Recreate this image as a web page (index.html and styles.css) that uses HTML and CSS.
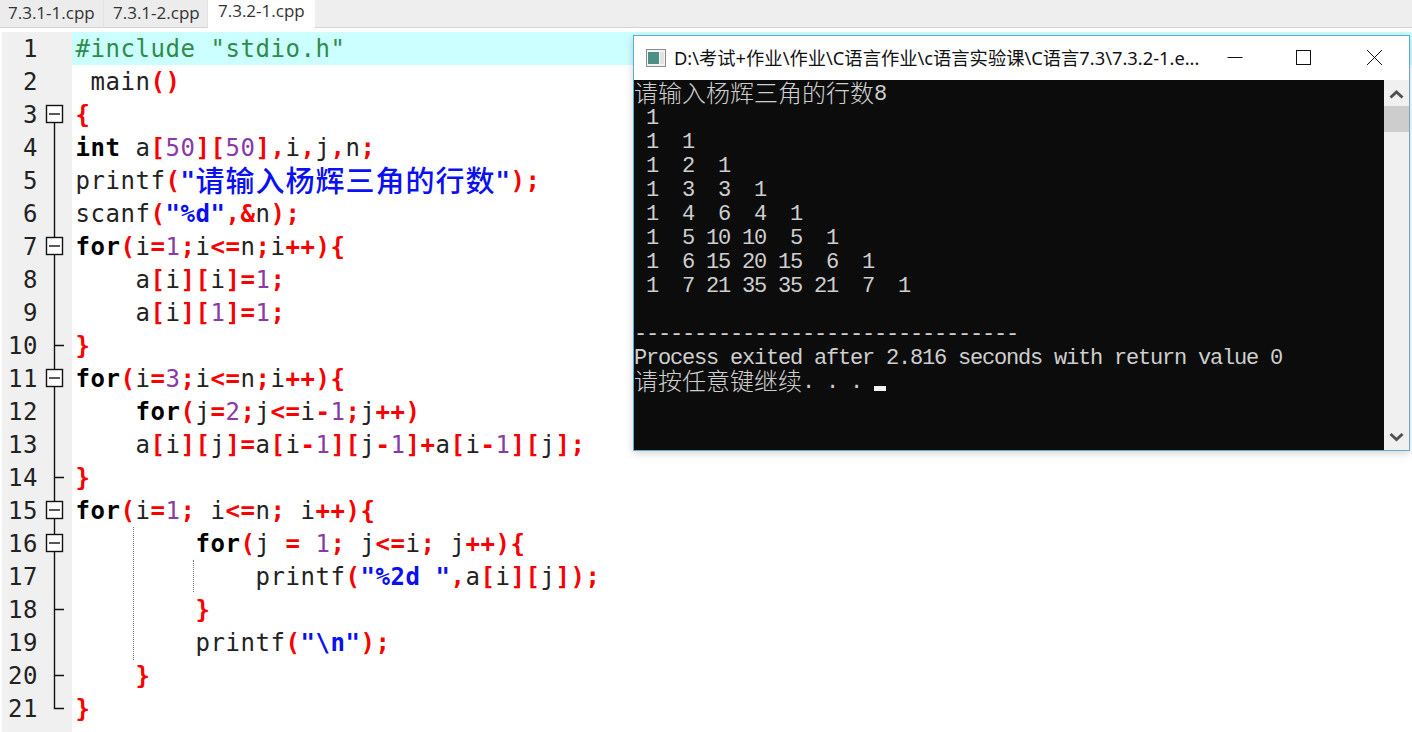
FILE: index.html
```html
<!DOCTYPE html>
<html lang="zh">
<head>
<meta charset="utf-8">
<title>7.3.2-1.cpp</title>
<link rel="stylesheet" href="styles.css">
</head>
<body>
<svg class="defs" width="0" height="0">
  <symbol id="f-open" viewBox="0 0 26 33"><path d="M9.5 25V33" class="fl"/><rect x="1.5" y="7.5" width="16" height="17" class="fb"/><path d="M4 16H15" class="fl"/></symbol>
  <symbol id="f-box" viewBox="0 0 26 33"><path d="M9.5 0V33" class="fl"/><rect x="1.5" y="7.5" width="16" height="17" class="fb"/><path d="M4 16H15" class="fl"/></symbol>
  <symbol id="f-line" viewBox="0 0 26 33"><path d="M9.5 0V33" class="fl"/></symbol>
  <symbol id="f-tick" viewBox="0 0 26 33"><path d="M9.5 0V33M9.5 16.5H19" class="fl"/></symbol>
  <symbol id="f-end" viewBox="0 0 26 33"><path d="M9.5 0V16.5H19" class="fl"/></symbol>
</svg>

<div class="tabbar">
  <div class="tab">7.3.1-1.cpp</div>
  <div class="tab">7.3.1-2.cpp</div>
  <div class="tab active">7.3.2-1.cpp</div>
</div>

<div class="editor">
  <div class="row"><div class="num">1</div><div class="fold"></div><pre class="code hl"><span class="p">#include "stdio.h"</span></pre></div>
  <div class="row"><div class="num">2</div><div class="fold"></div><pre class="code"> main<span class="o">()</span></pre></div>
  <div class="row"><div class="num">3</div><div class="fold"><svg class="ico"><use href="#f-open"/></svg></div><pre class="code"><span class="o">{</span></pre></div>
  <div class="row"><div class="num">4</div><div class="fold"><svg class="ico"><use href="#f-line"/></svg></div><pre class="code"><span class="k">int</span> a<span class="o">[</span><span class="n">50</span><span class="o">][</span><span class="n">50</span><span class="o">],</span>i<span class="o">,</span>j<span class="o">,</span>n<span class="o">;</span></pre></div>
  <div class="row"><div class="num">5</div><div class="fold"><svg class="ico"><use href="#f-line"/></svg></div><pre class="code">printf<span class="o">(</span><span class="s">"<span class="zh">请输入杨辉三角的行数</span>"</span><span class="o">);</span></pre></div>
  <div class="row"><div class="num">6</div><div class="fold"><svg class="ico"><use href="#f-line"/></svg></div><pre class="code">scanf<span class="o">(</span><span class="s">"%d"</span><span class="o">,&amp;</span>n<span class="o">);</span></pre></div>
  <div class="row"><div class="num">7</div><div class="fold"><svg class="ico"><use href="#f-box"/></svg></div><pre class="code"><span class="k">for</span><span class="o">(</span>i<span class="o">=</span><span class="n">1</span><span class="o">;</span>i<span class="o">&lt;=</span>n<span class="o">;</span>i<span class="o">++){</span></pre></div>
  <div class="row"><div class="num">8</div><div class="fold"><svg class="ico"><use href="#f-line"/></svg></div><pre class="code">    a<span class="o">[</span>i<span class="o">][</span>i<span class="o">]=</span><span class="n">1</span><span class="o">;</span></pre></div>
  <div class="row"><div class="num">9</div><div class="fold"><svg class="ico"><use href="#f-line"/></svg></div><pre class="code">    a<span class="o">[</span>i<span class="o">][</span><span class="n">1</span><span class="o">]=</span><span class="n">1</span><span class="o">;</span></pre></div>
  <div class="row"><div class="num">10</div><div class="fold"><svg class="ico"><use href="#f-tick"/></svg></div><pre class="code"><span class="o">}</span></pre></div>
  <div class="row"><div class="num">11</div><div class="fold"><svg class="ico"><use href="#f-box"/></svg></div><pre class="code"><span class="k">for</span><span class="o">(</span>i<span class="o">=</span><span class="n">3</span><span class="o">;</span>i<span class="o">&lt;=</span>n<span class="o">;</span>i<span class="o">++){</span></pre></div>
  <div class="row"><div class="num">12</div><div class="fold"><svg class="ico"><use href="#f-line"/></svg></div><pre class="code">    <span class="k">for</span><span class="o">(</span>j<span class="o">=</span><span class="n">2</span><span class="o">;</span>j<span class="o">&lt;=</span>i<span class="o">-</span><span class="n">1</span><span class="o">;</span>j<span class="o">++)</span></pre></div>
  <div class="row"><div class="num">13</div><div class="fold"><svg class="ico"><use href="#f-line"/></svg></div><pre class="code">    a<span class="o">[</span>i<span class="o">][</span>j<span class="o">]=</span>a<span class="o">[</span>i<span class="o">-</span><span class="n">1</span><span class="o">][</span>j<span class="o">-</span><span class="n">1</span><span class="o">]+</span>a<span class="o">[</span>i<span class="o">-</span><span class="n">1</span><span class="o">][</span>j<span class="o">];</span></pre></div>
  <div class="row"><div class="num">14</div><div class="fold"><svg class="ico"><use href="#f-tick"/></svg></div><pre class="code"><span class="o">}</span></pre></div>
  <div class="row"><div class="num">15</div><div class="fold"><svg class="ico"><use href="#f-box"/></svg></div><pre class="code"><span class="k">for</span><span class="o">(</span>i<span class="o">=</span><span class="n">1</span><span class="o">;</span> i<span class="o">&lt;=</span>n<span class="o">;</span> i<span class="o">++){</span></pre></div>
  <div class="row"><div class="num">16</div><div class="fold"><svg class="ico"><use href="#f-box"/></svg></div><pre class="code">        <span class="k">for</span><span class="o">(</span>j <span class="o">=</span> <span class="n">1</span><span class="o">;</span> j<span class="o">&lt;=</span>i<span class="o">;</span> j<span class="o">++){</span></pre></div>
  <div class="row"><div class="num">17</div><div class="fold"><svg class="ico"><use href="#f-line"/></svg></div><pre class="code">            printf<span class="o">(</span><span class="s">"%2d "</span><span class="o">,</span>a<span class="o">[</span>i<span class="o">][</span>j<span class="o">]);</span></pre></div>
  <div class="row"><div class="num">18</div><div class="fold"><svg class="ico"><use href="#f-tick"/></svg></div><pre class="code">        <span class="o">}</span></pre></div>
  <div class="row"><div class="num">19</div><div class="fold"><svg class="ico"><use href="#f-line"/></svg></div><pre class="code">        printf<span class="o">(</span><span class="s">"\n"</span><span class="o">);</span></pre></div>
  <div class="row"><div class="num">20</div><div class="fold"><svg class="ico"><use href="#f-tick"/></svg></div><pre class="code">    <span class="o">}</span></pre></div>
  <div class="row"><div class="num">21</div><div class="fold"><svg class="ico"><use href="#f-end"/></svg></div><pre class="code"><span class="o">}</span></pre></div>
  <div class="row filler"><div class="num"></div><div class="fold"></div></div>
  <div class="guide guide-a"></div>
  <div class="guide guide-b"></div>
</div>

<div class="window">
  <div class="titlebar">
    <svg class="appicon" viewBox="0 0 20 18"><rect x="0.5" y="0.5" width="19" height="17" fill="#f4f4f4" stroke="#8a8a8a"/><rect x="2" y="3" width="11" height="12" fill="#4b8f86"/><rect x="14" y="3" width="4" height="12" fill="#e2e2e2"/></svg>
    <div class="wintitle">D:\考试+作业\作业\C语言作业\c语言实验课\C语言7.3\7.3.2-1.e...</div>
    <div class="controls">
      <svg class="ctl" viewBox="0 0 72 44"><path d="M33.5 21.5H48.5" class="cs"/></svg>
      <svg class="ctl" viewBox="0 0 72 44"><rect x="30.5" y="14.5" width="14" height="14" class="cs"/></svg>
      <svg class="ctl" viewBox="0 0 72 44"><path d="M29 14L44 29M44 14L29 29" class="cs"/></svg>
    </div>
  </div>
  <div class="winbody">
    <div class="console">
      <div class="cl"><span class="zc">请输入杨辉三角的行数</span>8</div>
      <div class="cl"> 1</div>
      <div class="cl"> 1  1</div>
      <div class="cl"> 1  2  1</div>
      <div class="cl"> 1  3  3  1</div>
      <div class="cl"> 1  4  6  4  1</div>
      <div class="cl"> 1  5 10 10  5  1</div>
      <div class="cl"> 1  6 15 20 15  6  1</div>
      <div class="cl"> 1  7 21 35 35 21  7  1</div>
      <div class="cl"></div>
      <div class="cl">--------------------------------</div>
      <div class="cl">Process exited after 2.816 seconds with return value 0</div>
      <div class="cl"><span class="zc">请按任意键继续</span>. . . <span class="cursor"></span></div>
    </div>
    <div class="scrollbar">
      <svg class="arrow arrow-up" viewBox="0 0 25 26"><path d="M6.5 17.5L12.5 12L18.5 17.5" class="as"/></svg>
      <div class="track"><div class="thumb"></div></div>
      <svg class="arrow" viewBox="0 0 25 26"><path d="M6.5 10L12.5 15.5L18.5 10" class="as"/></svg>
    </div>
  </div>
</div>
</body>
</html>
```
FILE: styles.css
```css
html, body {
  margin: 0;
  padding: 0;
  width: 1412px;
  height: 732px;
  overflow: hidden;
  background: #fff;
}
body {
  display: flex;
  flex-direction: column;
  position: relative;
}
.defs { display: none; }

.tabbar {
  display: flex;
  flex: none;
  height: 27px;
  background: #eeeeee;
  border-bottom: 1px solid #d4d4d4;
  box-sizing: content-box;
  font-family: "Open Sans", "Noto Sans", sans-serif;
  font-size: 17px;
  color: #333;
}
.tab {
  width: 104px;
  box-sizing: border-box;
  padding-left: 8px;
  line-height: 26px;
  background: #ececec;
  border-right: 1px solid #e2e2e2;
}
.tab + .tab { padding-left: 9px; }
.tab.active {
  width: 107px;
  padding-left: 10px;
  height: 28px;
  line-height: 21px;
  background: #fff;
  border-right: 0;
}

.editor {
  flex: 1;
  margin-top: 4px;
  padding-left: 2px;
  position: relative;
  display: flex;
  flex-direction: column;
  min-height: 0;
}
.row {
  display: flex;
  flex: none;
  height: 33px;
}
.row.filler { flex: 1; height: auto; }
.num {
  width: 36px;
  box-sizing: border-box;
  padding-top: 2px;
  text-align: right;
  background: #f0f0f0;
  font-family: "DejaVu Sans Mono", monospace;
  font-size: 24px;
  letter-spacing: 0.55px;
  line-height: 31px;
  color: #222;
}
.fold {
  width: 34px;
  background: #f0f0f0;
  padding-left: 7px;
  box-sizing: border-box;
}
.ico { display: block; width: 26px; height: 33px; }
.fl { fill: none; stroke: #111; stroke-width: 1.4; }
.fb { fill: #fff; stroke: #111; stroke-width: 1.4; }

.code {
  flex: 1;
  margin: 0;
  box-sizing: border-box;
  padding: 2px 0 0 3.5px;
  font-family: "DejaVu Sans Mono", "Noto Sans CJK SC", monospace;
  font-size: 24px;
  letter-spacing: 0.55px;
  line-height: 31px;
  height: 33px;
  color: #222;
  white-space: pre;
}
.hl { background: #ccffff; }
.p { color: #2e8b4a; }
.k { font-weight: bold; color: #000; }
.n { color: #8a3aa8; }
.o { font-weight: bold; color: #f80000; }
.s { font-weight: bold; color: #0a10f0; }
.zh {
  font-family: "Noto Sans CJK SC", sans-serif;
  font-size: 29px;
  font-weight: 500;
  letter-spacing: 1px;
  line-height: 27px;
  vertical-align: top;
}
.guide {
  position: absolute;
  width: 0;
  border-left: 1px dotted #777;
}
.guide-a { left: 133px; top: 495px; height: 133px; }
.guide-b { left: 193px; top: 528px; height: 32px; }

.window {
  position: absolute;
  left: 633px;
  top: 35px;
  width: 777px;
  height: 416px;
  box-sizing: border-box;
  border: 1px solid #62a9d4;
  background: #fff;
  display: flex;
  flex-direction: column;
  box-shadow: 0 2px 8px rgba(0, 0, 0, 0.18);
}
.titlebar {
  flex: none;
  height: 44px;
  display: flex;
  align-items: center;
  padding-left: 12px;
}
.appicon { width: 20px; height: 18px; flex: none; }
.wintitle {
  margin-left: 8px;
  padding-bottom: 2px;
  flex: 1;
  min-width: 0;
  white-space: nowrap;
  font-family: "Noto Sans", "Noto Sans CJK SC", sans-serif;
  font-size: 18.3px;
  color: #111;
}
.controls { display: flex; flex: none; margin-right: -1px; }
.ctl { display: block; width: 72px; height: 44px; }
.cs { fill: none; stroke: #111; stroke-width: 1; }
.winbody {
  flex: 1;
  display: flex;
  min-height: 0;
}
.console {
  flex: 1;
  background: #0c0c0c;
  color: #cfcfcf;
  font-family: "Liberation Mono", monospace;
  font-size: 22px;
  letter-spacing: -1.2px;
}
.cl {
  box-sizing: border-box;
  height: 24px;
  padding-top: 3px;
  line-height: 22px;
  white-space: pre;
}
.cl:first-child { margin-top: 1px; }
.zc {
  font-family: "Noto Sans CJK SC", sans-serif;
  font-size: 24px;
  font-weight: 300;
  letter-spacing: 0;
  line-height: 16px;
  vertical-align: top;
}
.cursor {
  display: inline-block;
  width: 12px;
  height: 5px;
  background: #f2f2f2;
  vertical-align: -3px;
}
.scrollbar {
  flex: none;
  width: 25px;
  background: #f0f0f0;
  display: flex;
  flex-direction: column;
}
.arrow { display: block; width: 25px; height: 26px; flex: none; }
.as { fill: none; stroke: #505050; stroke-width: 3; }
.track { flex: 1; }
.thumb { height: 26px; background: #cdcdcd; }
```
